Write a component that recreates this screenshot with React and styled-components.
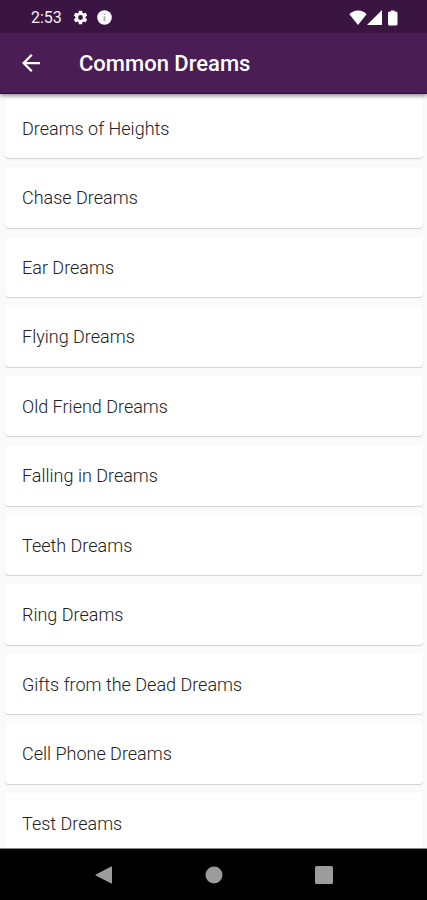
import React from "react";
import styled, { createGlobalStyle } from "styled-components";

const GlobalStyle = createGlobalStyle`
  * { box-sizing: border-box; }
  body { margin: 0; background: #fafafa; font-family: Roboto, "Liberation Sans", sans-serif; }
`;

const Screen = styled.div`
  display: flex;
  flex-direction: column;
  height: 100vh;
`;

const Header = styled.header`
  position: relative;
  z-index: 1;
  flex: none;
  background: #4a1e55;
  color: #fff;
  border-bottom: 1px solid #35084a;
  box-shadow: 0 2px 4px rgba(0, 0, 0, 0.4);
`;

const StatusBar = styled.div`
  display: flex;
  align-items: center;
  justify-content: space-between;
  height: 33px;
  padding: 2px 28px 0 31px;
  background: #3a1541;
`;

const StatusGroup = styled.div`
  display: flex;
  align-items: center;
  gap: ${(p) => p.$gap}px;
`;

const Clock = styled.time`
  margin-right: 2px;
  font-size: 16px;
  line-height: 20px;
  color: #f4eef5;
`;

const Toolbar = styled.div`
  display: flex;
  align-items: center;
  gap: 30px;
  height: 60px;
  padding: 0 13px;
`;

const BackButton = styled.button`
  display: grid;
  place-items: center;
  width: 36px;
  height: 36px;
  padding: 0;
  border: 0;
  background: none;
  color: inherit;
  cursor: pointer;
`;

const Title = styled.h1`
  margin: 0;
  padding-top: 2px;
  font-size: 22px;
  font-weight: 500;
  line-height: 28px;
`;

const Content = styled.main`
  flex: 1;
  min-height: 0;
  overflow-y: auto;
  scrollbar-width: none;
`;

const DreamList = styled.ul`
  display: flex;
  flex-direction: column;
  gap: 9px;
  margin: 0;
  padding: 4px 4px 4px 5px;
  list-style: none;
`;

const DreamCard = styled.li`
  padding: 18px 17px 16px;
  border-radius: 4px;
  background: #fff;
  box-shadow: 0 1px 1px rgba(0, 0, 0, 0.16);
  color: #222;
  font-size: 18px;
  font-weight: 300;
  line-height: 1.47;
`;

const NavBar = styled.nav`
  display: flex;
  flex: none;
  justify-content: center;
  height: 52px;
  border-top: 1px solid #858585;
  background: #000;
`;

const NavButton = styled.button`
  display: grid;
  place-items: center;
  width: 110px;
  padding: 0;
  border: 0;
  background: none;
  color: #9c9c9c;
  cursor: pointer;
`;

const dreams = [
  "Dreams of Heights",
  "Chase Dreams",
  "Ear Dreams",
  "Flying Dreams",
  "Old Friend Dreams",
  "Falling in Dreams",
  "Teeth Dreams",
  "Ring Dreams",
  "Gifts from the Dead Dreams",
  "Cell Phone Dreams",
  "Test Dreams",
];

function GearIcon() {
  return (
    <svg width="17" height="17" viewBox="0 0 24 24" fill="currentColor" aria-hidden="true">
      <path d="M19.14 12.94c.04-.3.06-.61.06-.94s-.02-.64-.07-.94l2.03-1.58a.5.5 0 0 0 .12-.61l-1.92-3.32a.49.49 0 0 0-.59-.22l-2.39.96a7 7 0 0 0-1.62-.94l-.36-2.54a.48.48 0 0 0-.48-.41h-3.84a.47.47 0 0 0-.47.41l-.36 2.54c-.59.24-1.13.57-1.62.94l-2.39-.96a.48.48 0 0 0-.59.22L2.74 8.87a.47.47 0 0 0 .12.61l2.03 1.58a6 6 0 0 0-.02 1.88l-2.03 1.58a.5.5 0 0 0-.12.61l1.92 3.32c.12.22.37.29.59.22l2.39-.96c.5.38 1.03.7 1.62.94l.36 2.54c.05.24.24.41.48.41h3.84c.24 0 .44-.17.47-.41l.36-2.54a7 7 0 0 0 1.62-.94l2.39.96c.22.08.47 0 .59-.22l1.92-3.32a.47.47 0 0 0-.12-.61zM12 15.4a3.4 3.4 0 1 1 0-6.8 3.4 3.4 0 0 1 0 6.8z" />
    </svg>
  );
}

function InfoIcon() {
  return (
    <svg width="15" height="15" viewBox="0 0 15 15" aria-hidden="true">
      <circle cx="7.5" cy="7.5" r="7.3" fill="#fff" />
      <path d="M7.5 3.5v1.6M7.5 6.3v5" stroke="#b5abb8" strokeWidth="1.8" />
    </svg>
  );
}

function WifiIcon() {
  return (
    <svg width="18" height="15" viewBox="0 0 18 15" fill="currentColor" aria-hidden="true">
      <path d="M9 15 .4 4.2C2.8 1.8 5.8.5 9 .5s6.2 1.3 8.6 3.7z" />
    </svg>
  );
}

function SignalIcon() {
  return (
    <svg width="15" height="15" viewBox="0 0 15 15" fill="currentColor" aria-hidden="true">
      <path d="M15 0v15H0z" />
    </svg>
  );
}

function BatteryIcon() {
  return (
    <svg width="17" height="16" viewBox="0 0 17 16" fill="currentColor" aria-hidden="true">
      <path d="M9 .5h3.5v1H14A1.500 1.500 0 0 1 15.500 3v11a1.500 1.500 0 0 1-1.500 1.500H7.500A1.500 1.500 0 0 1 6 14V3a1.500 1.500 0 0 1 1.500-1.500H9z" />
    </svg>
  );
}

function ArrowIcon() {
  return (
    <svg width="18" height="18" viewBox="0 0 16 16" fill="currentColor" aria-hidden="true">
      <path d="M16 7H3.83l5.59-5.59L8 0 0 8l8 8 1.41-1.41L3.83 9H16z" />
    </svg>
  );
}

export default function App() {
  return (
    <>
      <GlobalStyle />
      <Screen>
        <Header>
          <StatusBar>
            <StatusGroup $gap={8}>
              <Clock>2:53</Clock>
              <GearIcon />
              <InfoIcon />
            </StatusGroup>
            <StatusGroup $gap={0}>
              <WifiIcon />
              <SignalIcon />
              <BatteryIcon />
            </StatusGroup>
          </StatusBar>
          <Toolbar>
            <BackButton type="button" aria-label="Back">
              <ArrowIcon />
            </BackButton>
            <Title>Common Dreams</Title>
          </Toolbar>
        </Header>
        <Content>
          <DreamList>
            {dreams.map((name) => (
              <DreamCard key={name}>{name}</DreamCard>
            ))}
          </DreamList>
        </Content>
        <NavBar aria-label="System navigation">
          <NavButton type="button" aria-label="Back">
            <svg width="18" height="18" viewBox="0 0 18 18" fill="currentColor" aria-hidden="true">
              <path d="M17 1v16q0 .8-.8.4L.8 9.6q-.8-.6 0-1.200L16.200.6q.8-.4.8.4z" />
            </svg>
          </NavButton>
          <NavButton type="button" aria-label="Home">
            <svg width="18" height="18" viewBox="0 0 18 18" fill="currentColor" aria-hidden="true">
              <circle cx="9" cy="9" r="8.5" />
            </svg>
          </NavButton>
          <NavButton type="button" aria-label="Recent apps">
            <svg width="18" height="18" viewBox="0 0 18 18" fill="currentColor" aria-hidden="true">
              <rect width="18" height="18" rx="1.5" />
            </svg>
          </NavButton>
        </NavBar>
      </Screen>
    </>
  );
}
